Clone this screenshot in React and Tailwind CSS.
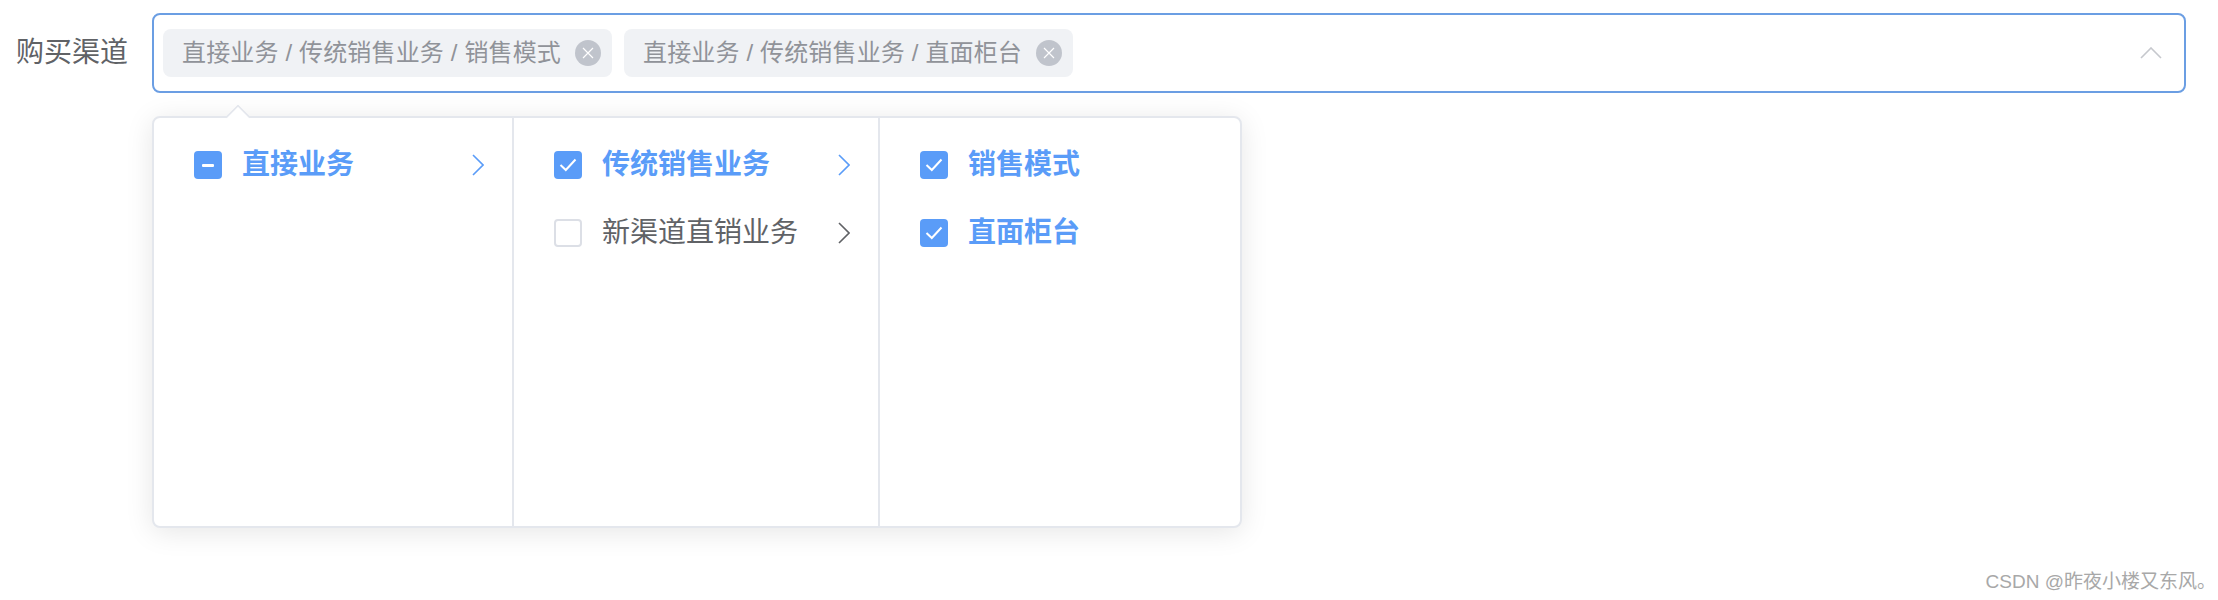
import React from 'react';

const FONT = "font-['Liberation_Sans','Noto_Sans_CJK_SC',sans-serif]";

const tags = ['直接业务 / 传统销售业务 / 销售模式', '直接业务 / 传统销售业务 / 直面柜台'];

const columns = [
  {
    width: 'w-[360px]',
    items: [{ label: '直接业务', state: 'partial', active: true, next: true }],
  },
  {
    width: 'w-[366px]',
    items: [
      { label: '传统销售业务', state: 'checked', active: true, next: true },
      { label: '新渠道直销业务', state: 'empty', active: false, next: true },
    ],
  },
  {
    width: 'flex-1',
    items: [
      { label: '销售模式', state: 'checked', active: true },
      { label: '直面柜台', state: 'checked', active: true },
    ],
  },
];

const Checkbox = ({ state }) => {
  if (state === 'empty') {
    return <span className="h-7 w-7 shrink-0 rounded-[4px] border-2 border-[#dcdfe6] bg-white" />;
  }
  return (
    <span className="flex h-7 w-7 shrink-0 items-center justify-center rounded-[4px] bg-[#5a9cf8]">
      {state === 'partial' ? (
        <span className="h-[3px] w-3 rounded-[1px] bg-white" />
      ) : (
        <svg width="18" height="16" viewBox="0 0 18 16" fill="none" stroke="white" strokeWidth="2">
          <path d="M1.5 8 L6.8 13 L16.5 2.5" />
        </svg>
      )}
    </span>
  );
};

const Chevron = ({ active }) => (
  <svg width="12" height="22" viewBox="0 0 12 22" fill="none" stroke={active ? '#5a9cf8' : '#606266'} strokeWidth="1.6" className="shrink-0">
    <path d="M1 1 L11 11 L1 21" />
  </svg>
);

const ClearIcon = () => (
  <span className="flex h-[26px] w-[26px] shrink-0 items-center justify-center rounded-full bg-[#c0c4cc]">
    <svg width="12" height="12" viewBox="0 0 12 12" fill="none" stroke="white" strokeWidth="1.2">
      <path d="M1 1 L11 11 M11 1 L1 11" />
    </svg>
  </span>
);

const App = () => {
  return (
    <div className={`${FONT} relative flex h-[600px] w-[2218px] flex-col bg-white pt-[13px]`}>
      <div className="flex items-start pr-8">
        <label className="w-[152px] pl-4 text-[28px] leading-[80px] text-[#606266]">购买渠道</label>

        <div className="relative flex-1">
          {/* input */}
          <div className="flex h-[80px] items-center gap-3 rounded-lg border-2 border-[#6b9ee3] bg-white pl-[9px] pr-[22px]">
            {tags.map((tag) => (
              <div key={tag} className="flex h-12 items-center gap-[14px] rounded-lg bg-[#f0f2f5] pl-[19px] pr-[11px] text-2xl tracking-[0.15px] text-[#909399]">
                <span>{tag}</span>
                <ClearIcon />
              </div>
            ))}
            <svg width="22" height="12" viewBox="0 0 22 12" fill="none" stroke="#c6c8cd" strokeWidth="1.6" className="ml-auto">
              <path d="M1 11 L11 1 L21 11" />
            </svg>
          </div>

          {/* dropdown */}
          <div className="absolute left-0 top-[103px] flex h-[412px] w-[1090px] rounded-lg border-2 border-[#e4e7ed] bg-white shadow-[0_4px_28px_rgba(0,0,0,0.1)]">
            <span className="absolute left-[75px] top-[-10px] h-[18px] w-[18px] rotate-45 rounded-tl-[2px] border-l-2 border-t-2 border-[#e4e7ed] bg-white" />
            {columns.map((col, i) => (
              <div key={i} className={`${col.width} relative pt-[13px] ${i < 2 ? 'border-r-2 border-[#e4e7ed]' : ''}`}>
                {col.items.map((item) => (
                  <div key={item.label} className="flex h-[68px] items-center pl-10 pr-7">
                    <Checkbox state={item.state} />
                    <span className={`ml-5 flex-1 text-[28px] ${item.active ? 'font-bold text-[#5a9cf8]' : 'text-[#606266]'}`}>
                      {item.label}
                    </span>
                    {item.next && <Chevron active={item.active} />}
                  </div>
                ))}
              </div>
            ))}
          </div>
        </div>
      </div>

      <div className="mt-auto self-end pb-2 pr-[2px] text-[19px] leading-5 text-[#a8a8a8]">CSDN @昨夜小楼又东风。</div>
    </div>
  );
};

export default App;
